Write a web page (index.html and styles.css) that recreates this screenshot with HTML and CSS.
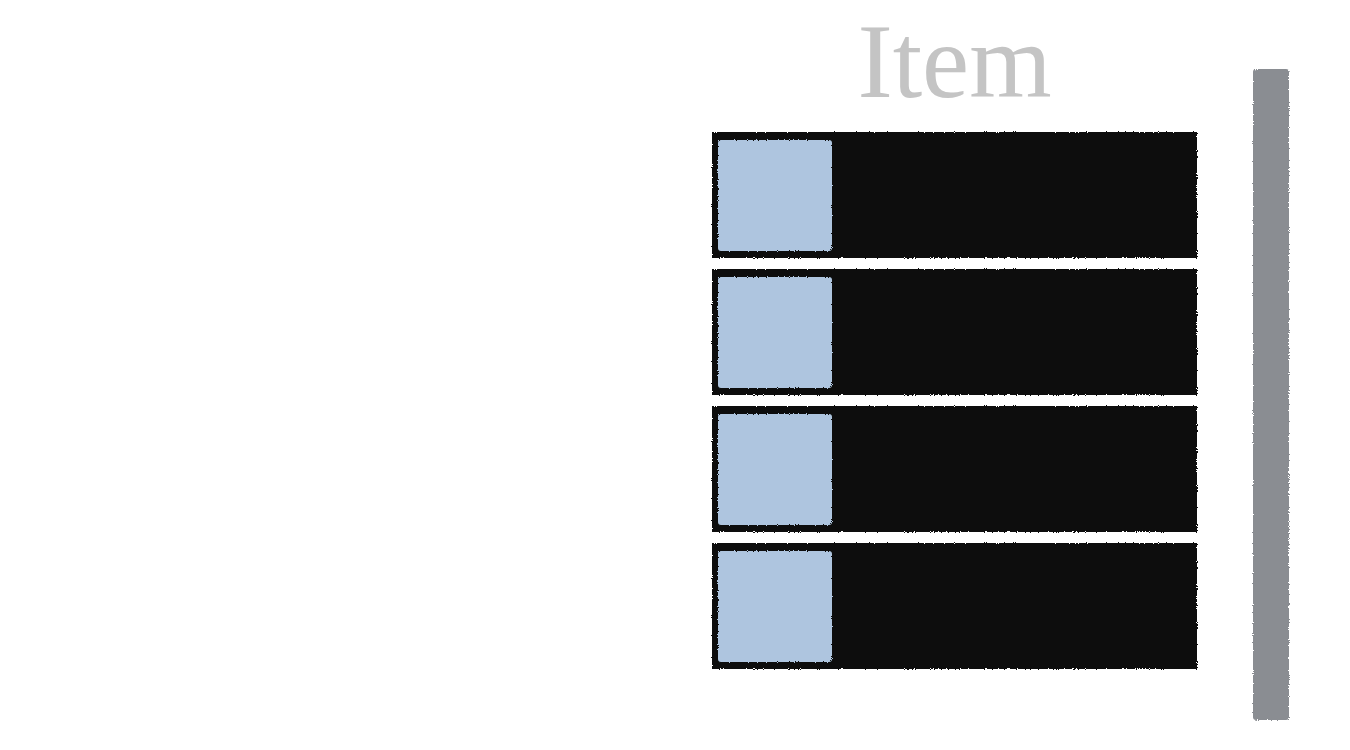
FILE: index.html
```html
<!DOCTYPE html>
<html lang="en">
<head>
  <meta charset="UTF-8">
  <meta name="viewport" content="width=device-width, initial-scale=1.0">
  <title>Item List</title>
  <link rel="stylesheet" href="styles.css">
</head>
<body>

  <!-- rough brush edge used by the rows and the scrollbar -->
  <svg class="defs" width="0" height="0">
    <filter id="rough">
      <feTurbulence type="fractalNoise" baseFrequency="0.9" numOctaves="2" result="noise" />
      <feDisplacementMap in="SourceGraphic" in2="noise" scale="3" />
    </filter>
  </svg>

  <div class="page">
    <section class="panel">
      <h1 class="title">Item</h1>

      <ul class="item-list">
        <li class="item"><span class="thumb"></span></li>
        <li class="item"><span class="thumb"></span></li>
        <li class="item"><span class="thumb"></span></li>
        <li class="item"><span class="thumb"></span></li>
      </ul>
    </section>

    <div class="scrollbar"></div>
  </div>

</body>
</html>
```

FILE: styles.css
```css
body {
  margin: 0;
  padding: 0;
  background-color: #ffffff;
  font-family: 'Liberation Serif', 'DejaVu Serif', serif;
}

.defs {
  position: absolute;
}

.page {
  display: flex;
  justify-content: flex-end;
  align-items: flex-start;
  height: 750px;
  padding-right: 61px;
}

.panel {
  width: 485px;
  padding-top: 9px;
}

.title {
  margin: 0 0 17px 0;
  font-size: 106px;
  font-weight: normal;
  line-height: 106px;
  color: #c4c4c4;
  text-align: center;
}

.item-list {
  list-style-type: none;
  margin: 0;
  padding: 0;
  display: flex;
  flex-direction: column;
  gap: 11px;
}

.item {
  height: 126px;
  padding: 8px 6px;
  box-sizing: border-box;
  background-color: #0a0a0a;
  filter: url(#rough);
}

.thumb {
  display: block;
  width: 114px;
  height: 111px;
  background-color: #aec5df;
  border-radius: 3px;
}

.scrollbar {
  width: 36px;
  height: 651px;
  margin-top: 69px;
  margin-left: 56px;
  background-color: #8a8d92;
  border-radius: 3px;
  filter: url(#rough);
}
```
